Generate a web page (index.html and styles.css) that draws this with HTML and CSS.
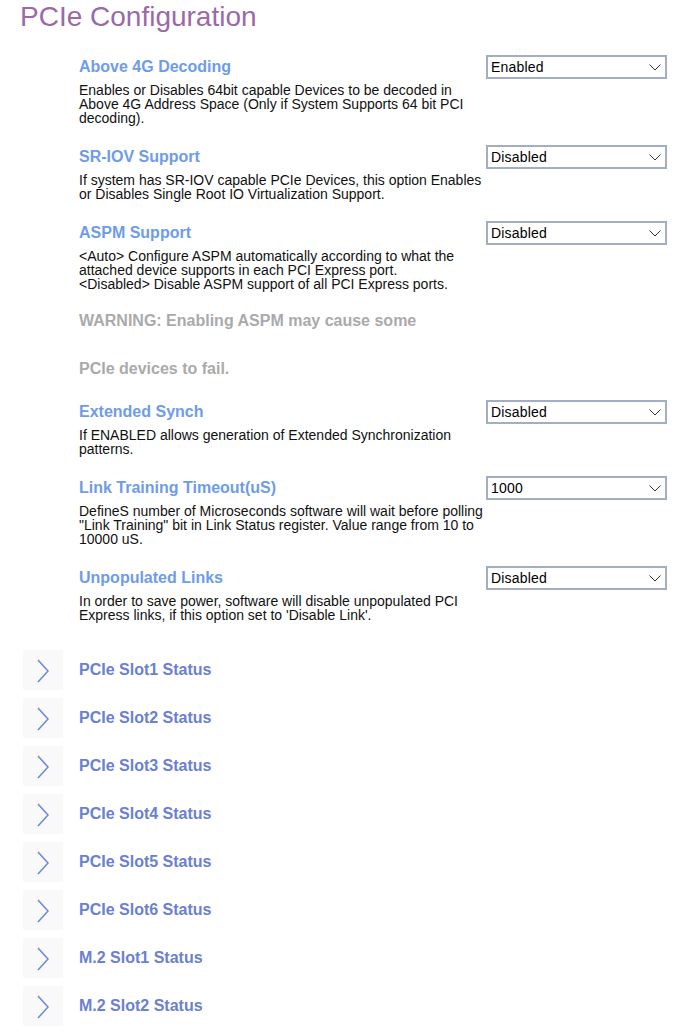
FILE: index.html
```html
<!DOCTYPE html>
<html lang="en">
<head>
<meta charset="utf-8">
<title>PCIe Configuration</title>
<link rel="stylesheet" href="styles.css">
</head>
<body>
<h1 class="title">PCIe Configuration</h1>

<div class="settings">
  <div class="setting">
    <div class="info">
      <div class="label">Above 4G Decoding</div>
      <div class="desc">Enables or Disables 64bit capable Devices to be decoded in Above 4G Address Space (Only if System Supports 64 bit PCI decoding).</div>
    </div>
    <div class="select"><span>Enabled</span><svg class="caret" width="12" height="7" viewBox="0 0 12 7"><path d="M0.5 0.5 L6 6 L11.5 0.5" fill="none" stroke="#333" stroke-width="1"/></svg></div>
  </div>

  <div class="setting">
    <div class="info">
      <div class="label">SR-IOV Support</div>
      <div class="desc">If system has SR-IOV capable PCIe Devices, this option Enables or Disables Single Root IO Virtualization Support.</div>
    </div>
    <div class="select"><span>Disabled</span><svg class="caret" width="12" height="7" viewBox="0 0 12 7"><path d="M0.5 0.5 L6 6 L11.5 0.5" fill="none" stroke="#333" stroke-width="1"/></svg></div>
  </div>

  <div class="setting">
    <div class="info">
      <div class="label">ASPM Support</div>
      <div class="desc">&lt;Auto&gt; Configure ASPM automatically according to what the attached device supports in each PCI Express port.<br>&lt;Disabled&gt; Disable ASPM support of all PCI Express ports.</div>
    </div>
    <div class="select"><span>Disabled</span><svg class="caret" width="12" height="7" viewBox="0 0 12 7"><path d="M0.5 0.5 L6 6 L11.5 0.5" fill="none" stroke="#333" stroke-width="1"/></svg></div>
  </div>

  <div class="warning first">WARNING: Enabling ASPM may cause some</div>
  <div class="warning second">PCIe devices to fail.</div>

  <div class="setting">
    <div class="info">
      <div class="label">Extended Synch</div>
      <div class="desc">If ENABLED allows generation of Extended Synchronization patterns.</div>
    </div>
    <div class="select"><span>Disabled</span><svg class="caret" width="12" height="7" viewBox="0 0 12 7"><path d="M0.5 0.5 L6 6 L11.5 0.5" fill="none" stroke="#333" stroke-width="1"/></svg></div>
  </div>

  <div class="setting">
    <div class="info">
      <div class="label">Link Training Timeout(uS)</div>
      <div class="desc">DefineS number of Microseconds software will wait before polling "Link Training" bit in Link Status register. Value range from 10 to 10000 uS.</div>
    </div>
    <div class="select"><span>1000</span><svg class="caret" width="12" height="7" viewBox="0 0 12 7"><path d="M0.5 0.5 L6 6 L11.5 0.5" fill="none" stroke="#333" stroke-width="1"/></svg></div>
  </div>

  <div class="setting">
    <div class="info">
      <div class="label">Unpopulated Links</div>
      <div class="desc">In order to save power, software will disable unpopulated PCI Express links, if this option set to 'Disable Link'.</div>
    </div>
    <div class="select"><span>Disabled</span><svg class="caret" width="12" height="7" viewBox="0 0 12 7"><path d="M0.5 0.5 L6 6 L11.5 0.5" fill="none" stroke="#333" stroke-width="1"/></svg></div>
  </div>
</div>

<div class="groups">
  <div class="group"><div class="toggle"><svg width="12" height="24" viewBox="0 0 12 24"><path d="M1 1 L11 12 L1 23" fill="none" stroke="#6f88d8" stroke-width="1.6"/></svg></div><span class="group-name">PCIe Slot1 Status</span></div>
  <div class="group"><div class="toggle"><svg width="12" height="24" viewBox="0 0 12 24"><path d="M1 1 L11 12 L1 23" fill="none" stroke="#6f88d8" stroke-width="1.6"/></svg></div><span class="group-name">PCIe Slot2 Status</span></div>
  <div class="group"><div class="toggle"><svg width="12" height="24" viewBox="0 0 12 24"><path d="M1 1 L11 12 L1 23" fill="none" stroke="#6f88d8" stroke-width="1.6"/></svg></div><span class="group-name">PCIe Slot3 Status</span></div>
  <div class="group"><div class="toggle"><svg width="12" height="24" viewBox="0 0 12 24"><path d="M1 1 L11 12 L1 23" fill="none" stroke="#6f88d8" stroke-width="1.6"/></svg></div><span class="group-name">PCIe Slot4 Status</span></div>
  <div class="group"><div class="toggle"><svg width="12" height="24" viewBox="0 0 12 24"><path d="M1 1 L11 12 L1 23" fill="none" stroke="#6f88d8" stroke-width="1.6"/></svg></div><span class="group-name">PCIe Slot5 Status</span></div>
  <div class="group"><div class="toggle"><svg width="12" height="24" viewBox="0 0 12 24"><path d="M1 1 L11 12 L1 23" fill="none" stroke="#6f88d8" stroke-width="1.6"/></svg></div><span class="group-name">PCIe Slot6 Status</span></div>
  <div class="group"><div class="toggle"><svg width="12" height="24" viewBox="0 0 12 24"><path d="M1 1 L11 12 L1 23" fill="none" stroke="#6f88d8" stroke-width="1.6"/></svg></div><span class="group-name">M.2 Slot1 Status</span></div>
  <div class="group"><div class="toggle"><svg width="12" height="24" viewBox="0 0 12 24"><path d="M1 1 L11 12 L1 23" fill="none" stroke="#6f88d8" stroke-width="1.6"/></svg></div><span class="group-name">M.2 Slot2 Status</span></div>
</div>
</body>
</html>
```

FILE: styles.css
```css
* { box-sizing: border-box; }

html, body {
  margin: 0;
  padding: 0;
  background: #ffffff;
}

body {
  font-family: "Liberation Sans", Arial, sans-serif;
  color: #000;
  width: 677px;
}

.title {
  margin: 0;
  padding: 1px 0 0 20px;
  font-size: 28px;
  line-height: 32px;
  font-weight: normal;
  color: #9b69aa;
}

.settings {
  padding: 22px 10px 0 79px;
}

.setting {
  display: flex;
  align-items: flex-start;
  margin-bottom: 20px;
}

.info {
  flex: 1;
  min-width: 0;
  padding-right: 2px;
}

.label {
  font-size: 16px;
  font-weight: bold;
  line-height: 24px;
  color: #6e9ce8;
}

.desc {
  margin-top: 4px;
  font-size: 14px;
  line-height: 14px;
  color: #111;
}

.select {
  flex: 0 0 181px;
  height: 24px;
  border: 2px solid #a3aec4;
  background: #fff;
  display: flex;
  align-items: center;
  justify-content: space-between;
  padding: 0 4px 0 3px;
  font-size: 14px;
  letter-spacing: 0.2px;
  color: #000;
}

.caret {
  display: block;
}

.warning {
  font-size: 16px;
  font-weight: bold;
  line-height: 24px;
  color: #aaaaaa;
}

.warning.first {
  margin-top: -2px;
}

.warning.second {
  margin-top: 24px;
  margin-bottom: 19px;
}

.groups {
  padding: 8px 0 0 23px;
}

.group {
  display: flex;
  align-items: center;
  gap: 16px;
  margin-bottom: 8px;
}

.toggle {
  width: 40px;
  height: 40px;
  background: #f9f9f9;
  display: flex;
  align-items: center;
  justify-content: center;
  padding-top: 1px;
}

.toggle svg {
  display: block;
}

.group-name {
  font-size: 16px;
  font-weight: bold;
  color: #6a80d0;
}
```
